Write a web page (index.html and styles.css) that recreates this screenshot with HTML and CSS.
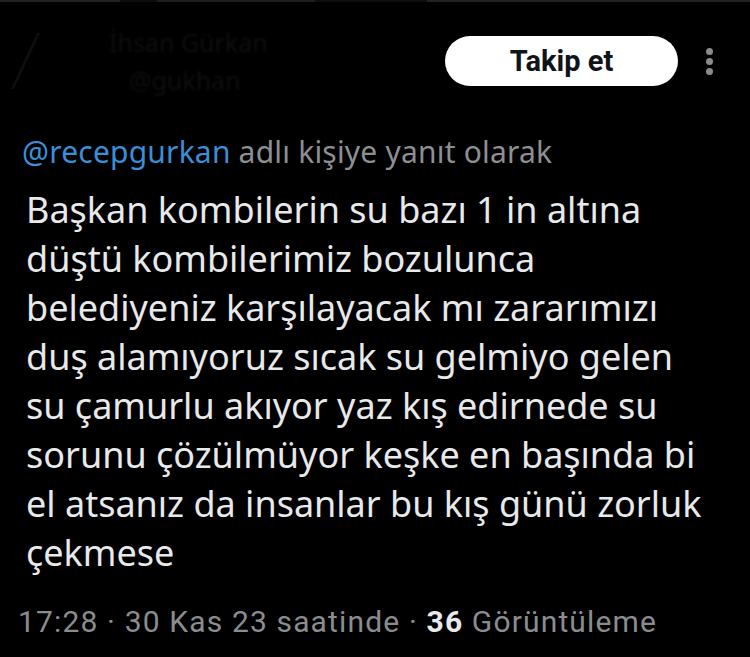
FILE: index.html
```html
<!DOCTYPE html>
<html lang="tr">
<head>
<meta charset="utf-8">
<link rel="stylesheet" href="styles.css">
</head>
<body>
<div class="topline"></div>
<header class="head">
  <div class="who">
    <span class="ghost-avatar"></span>
    <div class="ghost-name">
      <span class="g1">İhsan Gürkan</span>
      <span class="g2">@gukhan</span>
    </div>
  </div>
  <button class="follow">Takip et</button>
  <div class="more"><i></i><i></i><i></i></div>
</header>
<p class="reply"><span class="handle">@recepgurkan</span> adlı kişiye yanıt olarak</p>
<p class="body">Başkan kombilerin su bazı 1 in altına<br>düştü kombilerimiz bozulunca<br>belediyeniz karşılayacak mı zararımızı<br>duş alamıyoruz sıcak su gelmiyo gelen<br>su çamurlu akıyor yaz kış edirnede su<br>sorunu çözülmüyor keşke en başında bi<br>el atsanız da insanlar bu kış günü zorluk<br>çekmese</p>
<p class="meta">17:28 · 30 Kas 23 saatinde · <b>36</b> Görüntüleme</p>
</body>
</html>
```
FILE: styles.css
```css
html, body { margin: 0; padding: 0; background: #000; }
body { width: 750px; height: 657px; overflow: hidden; font-family: "Noto Sans", sans-serif; color: #e7e9ea; }
.topline { height: 2px; background: linear-gradient(90deg, #222 0 16%, #0c0c0c 16% 21%, #1e1e1e 21% 42%, #0e0e0e 42% 57%, #222 57% 100%); }
.head { display: flex; align-items: center; height: 118px; padding: 0 37px 0 24px; box-sizing: border-box; }
.who { flex: 1; display: flex; align-items: center; gap: 52px; }
.ghost-avatar { width: 30px; height: 56px; border-left: 3px solid #0e0e0e; transform: skewX(-25deg); }
.ghost-name { display: flex; flex-direction: column; font-size: 25px; line-height: 38px; color: #0f0f0f; filter: blur(1.2px); }
.ghost-name .g2 { padding-left: 20px; }
.follow { width: 233px; height: 50px; border: 0; border-radius: 25px; background: #fff; color: #0f1419; font-family: Roboto, sans-serif; font-weight: 700; font-size: 29px; padding: 0; margin-right: 28px; }
.more { display: flex; flex-direction: column; gap: 3px; }
.more i { width: 7px; height: 7px; border-radius: 50%; background: #8b8b8b; }
.reply { margin: 14px 0 0 22px; font-size: 30px; line-height: 36px; color: #8d8f92; letter-spacing: 0.2px; }
.handle { color: #3a8fd8; }
.body { margin: 15px 0 0 26px; font-size: 36px; line-height: 49px; }
.meta { margin: 27px 0 0 18px; font-family: Roboto, sans-serif; font-size: 30px; line-height: 36px; color: #8a8d90; letter-spacing: 1.15px; }
.meta b { color: #e7e9ea; font-weight: 700; }
```
